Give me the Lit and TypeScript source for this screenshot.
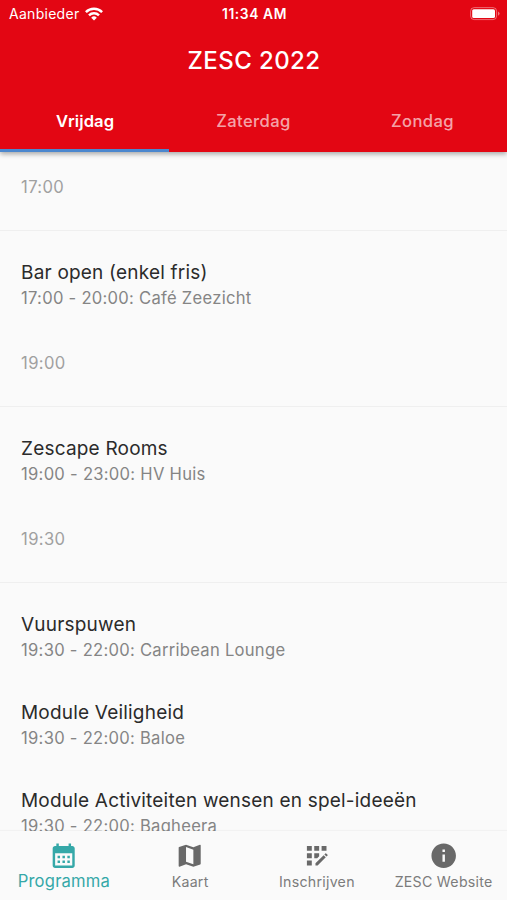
import { LitElement, html, css, svg } from "lit";
import { customElement, property } from "lit/decorators.js";
import { classMap } from "lit/directives/class-map.js";

interface Activity { title: string; when: string; }
interface Slot { time: string; items: Activity[]; }

const schedule: Slot[] = [
  { time: "17:00", items: [{ title: "Bar open (enkel fris)", when: "17:00 - 20:00: Café Zeezicht" }] },
  { time: "19:00", items: [{ title: "Zescape Rooms", when: "19:00 - 23:00: HV Huis" }] },
  {
    time: "19:30",
    items: [
      { title: "Vuurspuwen", when: "19:30 - 22:00: Carribean Lounge" },
      { title: "Module Veiligheid", when: "19:30 - 22:00: Baloe" },
      { title: "Module Activiteiten wensen en spel-ideeën", when: "19:30 - 22:00: Bagheera" },
    ],
  },
];

const icons: Record<string, string> = {
  calendar: "M19 4h-1V2h-2v2H8V2H6v2H5c-1.11 0-1.99.9-1.99 2L3 20c0 1.1.89 2 2 2h14c1.1 0 2-.9 2-2V6c0-1.1-.9-2-2-2zm0 16H5V10h14v10zM9 14H7v-2h2v2zm4 0h-2v-2h2v2zm4 0h-2v-2h2v2zm-8 4H7v-2h2v2zm4 0h-2v-2h2v2zm4 0h-2v-2h2v2z",
  map: "M20.5 3l-.16.03L15 5.1 9 3 3.36 4.9c-.21.07-.36.25-.36.48V20.5c0 .28.22.5.5.5l.16-.03L9 18.9l6 2.1 5.64-1.9c.21-.07.36-.25.36-.48V3.5c0-.28-.22-.5-.5-.5zM15 19l-6-2.11V5l6 2.11V19z",
  register: "M10 4h4v4h-4zM4 16h4v4H4zM4 10h4v4H4zM4 4h4v4H4zM14 12.42V10h-4v4h2.42zM20.88 11.29l-1.17-1.17c-.16-.16-.42-.16-.58 0l-.88.88L20 12.75l.88-.88c.16-.16.16-.42 0-.58zM11 18.25V20h1.75l6.67-6.67-1.75-1.75zM16 4h4v4h-4z",
  info: "M12 2C6.48 2 2 6.48 2 12s4.48 10 10 10 10-4.48 10-10S17.52 2 12 2zm1 15h-2v-6h2v6zm0-8h-2V7h2v2z",
};

@customElement("status-bar")
class StatusBar extends LitElement {
  static styles = css`
    :host { display: grid; grid-template-columns: 1fr auto 1fr; align-items: center; height: 27px; padding: 0 7px 0 9px; font-size: 14px; }
    .carrier { display: flex; align-items: center; gap: 6px; letter-spacing: 0.28px; }
    .clock { font-weight: 600; font-size: 13.8px; letter-spacing: 0.6px; }
    .battery { justify-self: end; }
    svg { display: block; }
  `;
  render() {
    return html`
      <div class="carrier">
        <span>Aanbieder</span>
        <svg width="18" height="14" viewBox="0 0 18 14" fill="none" stroke="#fff" stroke-width="2.5">
          <path d="M0.9 5.1a11.6 11.6 0 0 1 16.2 0" />
          <path d="M4 8.3a7.2 7.2 0 0 1 10 0" />
          <path d="M9 13.6 6.2 10.7a4 4 0 0 1 5.6 0z" fill="#fff" stroke="none" />
        </svg>
      </div>
      <span class="clock">11:34 AM</span>
      <svg class="battery" width="30" height="14" viewBox="0 0 30 14">
        <rect x="0.6" y="0.6" width="26" height="12" rx="3.6" fill="none" stroke="#fff" stroke-opacity=".4" />
        <rect x="2.2" y="2.2" width="22.8" height="8.8" rx="1.6" fill="#fff" />
        <path d="M28 4.4q1.6.8 1.6 2.2T28 8.8z" fill="#fff" fill-opacity=".45" />
      </svg>
    `;
  }
}

@customElement("day-tabs")
class DayTabs extends LitElement {
  @property({ type: Array }) days: string[] = [];
  @property({ type: Number }) active = 0;
  static styles = css`
    :host { display: grid; grid-template-columns: repeat(3, 1fr); height: 60px; }
    .tab { display: flex; align-items: center; justify-content: center; padding-top: 1px; border-bottom: 3px solid transparent; color: rgba(255, 255, 255, 0.65); font-size: 16.6px; font-weight: 500; letter-spacing: 0.4px; }
    .active { padding-left: 1px; color: #fff; font-weight: 600; letter-spacing: 0.05px; border-color: #4b87ce; }
  `;
  render() {
    return this.days.map((d, i) => html`<div class=${classMap({ tab: true, active: i === this.active })}>${d}</div>`);
  }
}

@customElement("programme-list")
class ProgrammeList extends LitElement {
  static styles = css`
    :host { display: block; }
    .time { display: flex; align-items: center; height: 68.4px; padding-left: 21px; color: #a0a0a0; font-size: 16.6px; letter-spacing: 0.38px; }
    .rule { height: 1px; margin: 9.3px 0; background: #efefef; }
    .item { height: 88px; box-sizing: border-box; padding: 20px 0 0 21px; white-space: nowrap; }
    .title { line-height: 25px; font-size: 19px; letter-spacing: 0.2px; color: #2b2b2b; }
    .when { line-height: 26px; font-size: 16.6px; letter-spacing: 0.27px; color: #858585; }
  `;
  render() {
    return schedule.map((s) => html`
      <div class="time">${s.time}</div>
      <div class="rule"></div>
      ${s.items.map((a) => html`
        <div class="item">
          <div class="title">${a.title}</div>
          <div class="when">${a.when}</div>
        </div>`)}
    `);
  }
}

@customElement("nav-item")
class NavItem extends LitElement {
  @property() icon = "";
  @property() label = "";
  @property({ type: Boolean, reflect: true }) active = false;
  static styles = css`
    :host { display: flex; flex-direction: column; align-items: center; color: #7c7c7c; font-size: 14.2px; letter-spacing: 0.26px; white-space: nowrap; }
    :host([active]) { padding-left: 1px; color: #35a8a8; font-size: 16.6px; letter-spacing: 0.2px; }
    .icon { display: block; width: 29.4px; height: 29.4px; fill: currentColor; color: #696969; }
    :host([active]) .icon { color: #35a8a8; }
    .label { line-height: 20px; margin-top: 1.8px; }
    :host([active]) .label { margin-top: 0.4px; }
  `;
  render() {
    return html`
      <svg class="icon" viewBox="0 0 24 24">${svg`<path d=${icons[this.icon]} />`}</svg>
      <span class="label">${this.label}</span>
    `;
  }
}

@customElement("app-root")
class AppRoot extends LitElement {
  static styles = css`
    :host { display: flex; flex-direction: column; height: 900px; overflow: hidden; background: #fafafa; font-family: Inter, "Liberation Sans", sans-serif; }
    .header { display: flex; flex-direction: column; flex: none; height: 152.4px; background: #e30613; color: #fff; box-shadow: 0 2px 5px rgba(0, 0, 0, 0.34); z-index: 1; }
    .heading { display: flex; align-items: center; justify-content: center; height: 65.4px; padding: 1px 0 0 1px; box-sizing: border-box; font-size: 24px; font-weight: 500; letter-spacing: 0.4px; }
    .list { flex: 1; min-height: 0; overflow: hidden; }
    .nav { display: grid; grid-template-columns: repeat(4, 1fr); flex: none; height: 69px; box-sizing: border-box; padding-top: 10px; background: #fafafa; box-shadow: 0 -1px 1px rgba(0, 0, 0, 0.03); }
  `;
  render() {
    return html`
      <header class="header">
        <status-bar></status-bar>
        <div class="heading">ZESC 2022</div>
        <day-tabs .days=${["Vrijdag", "Zaterdag", "Zondag"]} .active=${0}></day-tabs>
      </header>
      <programme-list class="list"></programme-list>
      <nav class="nav">
        <nav-item icon="calendar" label="Programma" active></nav-item>
        <nav-item icon="map" label="Kaart"></nav-item>
        <nav-item icon="register" label="Inschrijven"></nav-item>
        <nav-item icon="info" label="ZESC Website"></nav-item>
      </nav>
    `;
  }
}
